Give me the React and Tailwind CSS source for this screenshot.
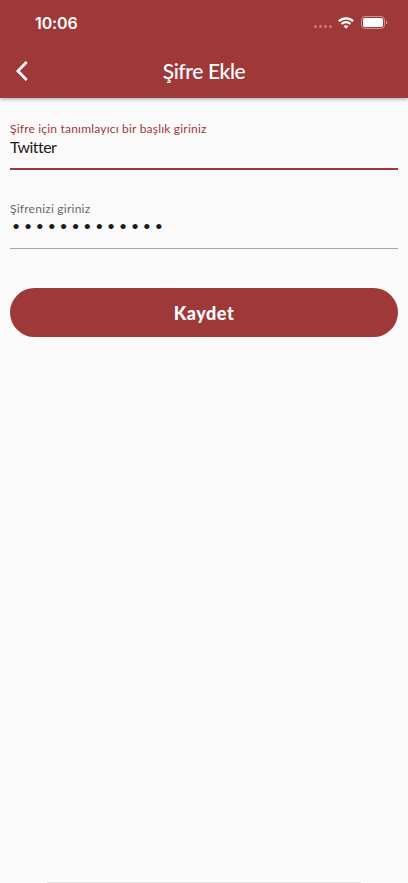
const BackIcon = () => (
    <svg width="12" height="20" viewBox="0 0 12 20" fill="none" stroke="white" strokeWidth="2.7">
        <path d="M10.7 1 L1.9 10 L10.7 19" />
    </svg>
);

const WifiIcon = () => (
    <svg width="16" height="12" viewBox="0 0 16 12" fill="none" stroke="white">
        <path d="M0.9 4.2 C4.9 0.3 11.1 0.3 15.1 4.2" strokeWidth="2.3" />
        <path d="M3.5 6.9 C6 4.5 10 4.5 12.5 6.9" strokeWidth="2.1" />
        <path d="M8 11.8 L5.5 9.3 C6.9 8 9.1 8 10.5 9.3 Z" fill="white" stroke="none" />
    </svg>
);

const BatteryIcon = () => (
    <svg width="27" height="13" viewBox="0 0 27 13" fill="none">
        <rect x="0.5" y="0.5" width="23" height="12" rx="3.5" stroke="white" strokeOpacity="0.45" />
        <rect x="2" y="2" width="20" height="9" rx="2" fill="white" />
        <path d="M25 4.5 C26.7 5.2 26.7 7.8 25 8.5 Z" fill="white" fillOpacity="0.5" />
    </svg>
);

const StatusBar = () => (
    <div className="flex h-[45px] items-center justify-between pl-[35px] pr-[20px]">
        <span className="font-['Inter',sans-serif] text-[16px] leading-none font-semibold tracking-[-0.1px]">10:06</span>
        <div className="flex items-center">
            <div className="mt-[8px] mr-[6px] flex gap-[2px]">
                {[0, 1, 2, 3].map((dot) => (
                    <span key={dot} className="size-[3px] rounded-full bg-white/35" />
                ))}
            </div>
            <WifiIcon />
            <div className="ml-[7px]">
                <BatteryIcon />
            </div>
        </div>
    </div>
);

const App = () => {
    return (
        <div className="flex h-[883px] w-[408px] flex-col overflow-hidden bg-[#fafafa] font-['Lato',sans-serif]">
            {/* App bar */}
            <header className="h-[98px] shrink-0 bg-[#9f3839] text-white shadow-[0_1px_4px_rgba(0,0,0,0.35)]">
                <StatusBar />
                <div className="grid h-[52px] grid-cols-[48px_1fr_48px] items-center">
                    <button className="pl-[16px]" aria-label="Geri">
                        <BackIcon />
                    </button>
                    <h1 className="text-center text-[21px] leading-[24px] font-medium tracking-[-0.4px]">Şifre Ekle</h1>
                </div>
            </header>

            {/* Form */}
            <main className="flex flex-1 flex-col px-[10px] pt-[22px]">
                <div className="h-[50px] border-b-2 border-[#9f3839]">
                    <div className="text-[12px] leading-[17px] tracking-[0.2px] whitespace-nowrap text-[#9f3839]">Şifre için tanımlayıcı bir başlık giriniz</div>
                    <div className="text-[16px] leading-[20px] tracking-[-0.55px] text-[#1c1c1c]">Twitter</div>
                </div>
                <div className="mt-[30px] h-[49px] border-b border-[#a5a5a5]">
                    <div className="pt-px text-[12px] leading-[16px] tracking-[0.24px] text-[#686868]">Şifrenizi giriniz</div>
                    <div className="pl-[2px] text-[14px] leading-[17px] tracking-[3.77px] text-[#1c1c1c]">•••••••••••••</div>
                </div>
                <button className="mt-[39px] h-[49px] rounded-full bg-[#9f3839] pt-px text-[18px] font-black tracking-[0.55px] text-white">Kaydet</button>
            </main>

            {/* Bottom edge */}
            <div className="mx-auto h-px w-[314px] bg-[#e2e2e2]" />
        </div>
    );
};

export default App;
